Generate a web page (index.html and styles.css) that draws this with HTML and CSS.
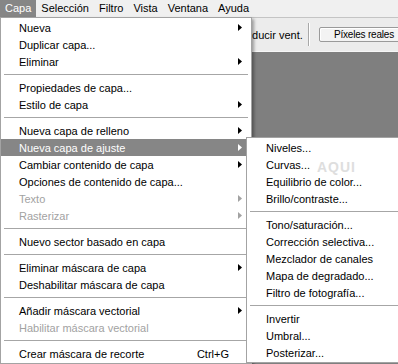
FILE: index.html
```html
<!DOCTYPE html>
<html lang="es">
<head>
  <meta charset="UTF-8">
  <title>Capa - menú</title>
  <link rel="stylesheet" href="styles.css">
</head>
<body>

  <div class="menubar">
    <span class="menubar-item active">Capa</span>
    <span class="menubar-item">Selección</span>
    <span class="menubar-item">Filtro</span>
    <span class="menubar-item">Vista</span>
    <span class="menubar-item">Ventana</span>
    <span class="menubar-item">Ayuda</span>
  </div>

  <div class="toolbar">
    <span class="tool-label">Reducir vent.</span>
    <span class="tool-sep"></span>
    <span class="tool-button">Píxeles reales</span>
  </div>

  <div class="canvas"></div>

  <div class="menu main-menu">
    <div class="item"><span class="label">Nueva</span><span class="arrow"></span></div>
    <div class="item"><span class="label">Duplicar capa...</span></div>
    <div class="item"><span class="label">Eliminar</span><span class="arrow"></span></div>
    <div class="sep"></div>
    <div class="item"><span class="label">Propiedades de capa...</span></div>
    <div class="item"><span class="label">Estilo de capa</span><span class="arrow"></span></div>
    <div class="sep"></div>
    <div class="item"><span class="label">Nueva capa de relleno</span><span class="arrow"></span></div>
    <div class="item selected"><span class="label">Nueva capa de ajuste</span><span class="arrow"></span></div>
    <div class="item"><span class="label">Cambiar contenido de capa</span><span class="arrow"></span></div>
    <div class="item"><span class="label">Opciones de contenido de capa...</span></div>
    <div class="item disabled"><span class="label">Texto</span><span class="arrow"></span></div>
    <div class="item disabled"><span class="label">Rasterizar</span><span class="arrow"></span></div>
    <div class="sep"></div>
    <div class="item"><span class="label">Nuevo sector basado en capa</span></div>
    <div class="sep"></div>
    <div class="item"><span class="label">Eliminar máscara de capa</span><span class="arrow"></span></div>
    <div class="item"><span class="label">Deshabilitar máscara de capa</span></div>
    <div class="sep"></div>
    <div class="item"><span class="label">Añadir máscara vectorial</span><span class="arrow"></span></div>
    <div class="item disabled"><span class="label">Habilitar máscara vectorial</span></div>
    <div class="sep"></div>
    <div class="item"><span class="label">Crear máscara de recorte</span><span class="key">Ctrl+G</span></div>
  </div>

  <div class="menu sub-menu">
    <div class="item"><span class="label">Niveles...</span></div>
    <div class="item"><span class="label">Curvas...</span></div>
    <div class="item"><span class="label">Equilibrio de color...</span></div>
    <div class="item"><span class="label">Brillo/contraste...</span></div>
    <div class="sep"></div>
    <div class="item"><span class="label">Tono/saturación...</span></div>
    <div class="item"><span class="label">Corrección selectiva...</span></div>
    <div class="item"><span class="label">Mezclador de canales</span></div>
    <div class="item"><span class="label">Mapa de degradado...</span></div>
    <div class="item"><span class="label">Filtro de fotografía...</span></div>
    <div class="sep"></div>
    <div class="item"><span class="label">Invertir</span></div>
    <div class="item"><span class="label">Umbral...</span></div>
    <div class="item"><span class="label">Posterizar...</span></div>
    <span class="watermark">AQUI</span>
  </div>

</body>
</html>
```

FILE: styles.css
```css
* {
  box-sizing: border-box;
}

body {
  margin: 0;
  width: 398px;
  height: 364px;
  overflow: hidden;
  position: relative;
  font-family: "Liberation Sans", Arial, sans-serif;
  font-size: 11px;
  color: #000;
  background: #7f7f7f;
}

/* barra de menús */
.menubar {
  display: flex;
  height: 17px;
  line-height: 16px;
  background: #f0f0f0;
}

.menubar-item {
  padding: 0 5px;
}

.menubar-item.active {
  background: #868686;
  color: white;
}

/* barra de opciones */
.toolbar {
  display: flex;
  align-items: center;
  height: 35px;
  padding-left: 238px;
  background: #ececec;
  border-top: 1px solid #c4c4c4;
  border-bottom: 1px solid #f6f6f6;
  white-space: nowrap;
}

.tool-label {
  flex: 0 0 70px;
}

.tool-sep {
  flex: 0 0 2px;
  height: 23px;
  border-left: 1px solid #a8a8a8;
  border-right: 1px solid #fff;
}

.tool-button {
  flex: 0 0 auto;
  margin-left: 9px;
  height: 15px;
  line-height: 13px;
  padding: 0 30px 0 14px;
  font-size: 10px;
  letter-spacing: -0.2px;
  background: #f3f3f3;
  border: 1px solid #9a9a9a;
  border-radius: 2px;
  box-shadow: inset 1px 1px 0 #fff;
}

/* menús desplegables */
.menu {
  position: absolute;
  background: white;
  border: 1px solid #a3a3a3;
  padding: 1px 0;
}

.main-menu {
  left: 0;
  top: 17px;
  width: 252px;
  box-shadow: 2px 2px 3px rgba(0,0,0,0.35);
}

.sub-menu {
  left: 246px;
  top: 137px;
  width: 170px;
}

.item {
  display: flex;
  align-items: center;
  height: 17px;
  white-space: nowrap;
}

.item .label {
  flex: 1;
  padding-left: 18px;
}

.sub-menu .item .label {
  padding-left: 19px;
}

.item .key {
  margin-right: 22px;
}

.item .arrow {
  width: 4px;
  height: 7px;
  margin-right: 9px;
  background: #000;
  clip-path: polygon(0 0, 100% 50%, 0 100%);
}

.item.selected {
  background: #868686;
  color: white;
}

.item.selected .arrow {
  background: white;
}

.item.disabled {
  color: #a2a2a2;
}

.item.disabled .arrow {
  background: #a2a2a2;
}

.sep {
  height: 9px;
  margin: 0 3px;
  padding-top: 4px;
}

.sep::before {
  content: "";
  display: block;
  height: 1px;
  background: #a6a6a6;
}

.sub-menu .sep {
  margin: 0 0 0 3px;
}

.watermark {
  position: absolute;
  left: 70px;
  top: 21px;
  font-size: 14px;
  font-weight: bold;
  letter-spacing: 1px;
  color: #dedede;
}
```
